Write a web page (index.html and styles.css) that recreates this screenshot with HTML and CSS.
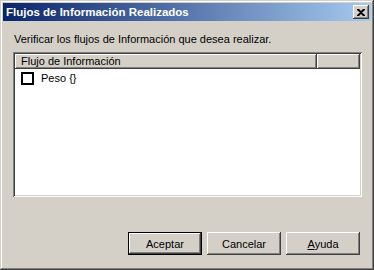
FILE: index.html
```html
<!DOCTYPE html>
<html lang="es">
<head>
    <meta charset="UTF-8">
    <title>Flujos de Información Realizados</title>
    <link rel="stylesheet" href="styles.css">
</head>
<body>
    <div class="window">
        <div class="titlebar">
            <span class="title">Flujos de Información Realizados</span>
            <span class="closeBtn">
                <svg width="8" height="7" viewBox="0 0 8 7"><path d="M0 0h2l2 2 2-2h2v1L5 3.5 8 6v1H6L4 5 2 7H0V6l3-2.5L0 1z" fill="#000"/></svg>
            </span>
        </div>

        <div class="content">
            <p class="prompt">Verificar los flujos de Información que desea realizar.</p>

            <div class="listView">
                <div class="header">
                    <div class="col colMain">Flujo de Información</div>
                    <div class="col colRest"></div>
                </div>
                <div class="rows">
                    <div class="row">
                        <span class="check"></span>
                        <span>Peso {}</span>
                    </div>
                </div>
            </div>

            <div class="buttons">
                <button class="btn default">Aceptar</button>
                <button class="btn">Cancelar</button>
                <button class="btn"><u>A</u>yuda</button>
            </div>
        </div>
    </div>
</body>
</html>
```

FILE: styles.css
```css
body {
    margin: 0;
    padding: 0;
    font-family: Tahoma, "Liberation Sans", Arial, sans-serif;
    font-size: 11px;
    color: #000;
}

.window {
    width: 374px;
    height: 270px;
    box-sizing: border-box;
    padding: 3px;
    background: #d4d0c8;
    box-shadow: inset -1px -1px #404040, inset 1px 1px #d4d0c8,
                inset -2px -2px #808080, inset 2px 2px #fff;
    display: flex;
    flex-direction: column;
}

.titlebar {
    height: 18px;
    background: linear-gradient(90deg, #0a246a, #a6caf0);
    display: flex;
    align-items: center;
    justify-content: space-between;
    padding: 0 2px 0 3px;
}

.title {
    color: #fff;
    font-weight: bold;
    font-size: 11.5px;
}

.closeBtn {
    width: 16px;
    height: 14px;
    box-sizing: border-box;
    background: #d4d0c8;
    box-shadow: inset -1px -1px #404040, inset 1px 1px #fff,
                inset -2px -2px #808080;
    display: flex;
    align-items: center;
    justify-content: center;
}

.content {
    flex: 1;
    display: flex;
    flex-direction: column;
    padding: 0 9px 0 10px;
}

.prompt {
    margin: 12px 0 0 1px;
    line-height: 13px;
}

.listView {
    margin-top: 6px;
    height: 145px;
    box-sizing: border-box;
    padding: 2px;
    background: #fff;
    box-shadow: inset 1px 1px #808080, inset -1px -1px #fff,
                inset 2px 2px #404040, inset -2px -2px #d4d0c8;
    display: flex;
    flex-direction: column;
}

.header {
    display: flex;
    height: 15px;
}

.col {
    box-sizing: border-box;
    background: #d4d0c8;
    box-shadow: inset -1px -1px #404040, inset 1px 1px #fff,
                inset -2px -2px #808080;
    line-height: 15px;
    padding-left: 6px;
}

.colMain {
    width: 302px;
}

.colRest {
    flex: 1;
}

.row {
    display: flex;
    align-items: center;
    gap: 7px;
    padding: 2px 0 0 6px;
    height: 14px;
}

.check {
    width: 13px;
    height: 13px;
    box-sizing: border-box;
    border: 2px solid #000;
    background: #fff;
}

.buttons {
    margin-top: auto;
    margin-bottom: 12px;
    display: flex;
    justify-content: flex-end;
    gap: 5px;
    padding-right: 2px;
}

.btn {
    width: 74px;
    height: 23px;
    font-family: inherit;
    font-size: 11px;
    color: #000;
    background: #d4d0c8;
    border: none;
    padding: 0;
    box-shadow: inset -1px -1px #404040, inset 1px 1px #fff,
                inset -2px -2px #808080;
}

.btn.default {
    border: 1px solid #000;
}
```
